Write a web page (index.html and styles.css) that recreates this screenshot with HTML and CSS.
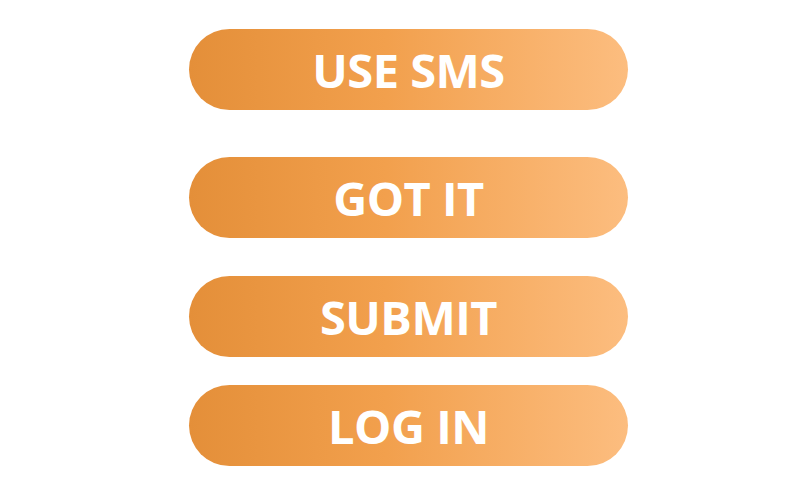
FILE: index.html
```
<!DOCTYPE html>
<html>
<head>
<meta charset="utf-8">
<link rel="stylesheet" href="styles.css">
</head>
<body>
<main class="stack">
  <button class="btn">USE SMS</button>
  <button class="btn btn-2">GOT IT</button>
  <button class="btn btn-3">SUBMIT</button>
  <button class="btn btn-4">LOG IN</button>
</main>
</body>
</html>
```
FILE: styles.css
```
html, body {
  margin: 0;
  padding: 0;
  background: #ffffff;
}
.stack {
  display: flex;
  flex-direction: column;
  align-items: center;
  padding-top: 29px;
  padding-left: 17px;
}
.btn {
  width: 439px;
  height: 81px;
  border: none;
  border-radius: 41px;
  background: linear-gradient(to right, #e48f39 0%, #f2a04d 45%, #fcbd7f 100%);
  color: #ffffff;
  font-family: "Open Sans", "DejaVu Sans", sans-serif;
  font-weight: 700;
  font-size: 47px;
  letter-spacing: -0.5px;
  padding: 0;
  display: flex;
  align-items: center;
  justify-content: center;
}
.btn-2 { margin-top: 47px; }
.btn-3 { margin-top: 38px; }
.btn-4 { margin-top: 28px; }
```
